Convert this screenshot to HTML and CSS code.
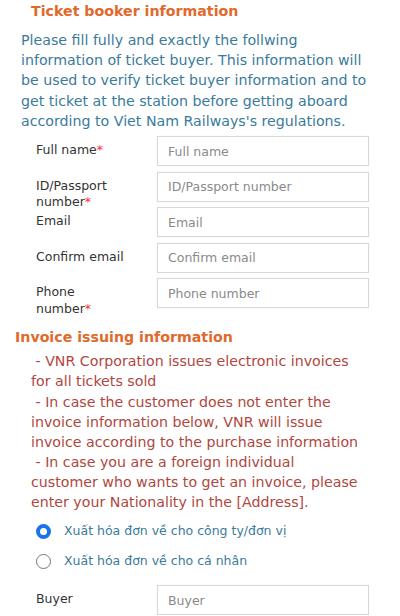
FILE: index.html
```html
<!DOCTYPE html>
<html>
<head>
<meta charset="utf-8">
<link rel="stylesheet" href="styles.css">
</head>
<body>
<div class="page">
  <h2 class="title booker-title">Ticket booker information</h2>
  <p class="intro">Please fill fully and exactly the follwing information of ticket buyer. This information will be used to verify ticket buyer information and to get ticket at the station before getting aboard according to Viet Nam Railways's regulations.</p>
  <div class="form">
    <div class="row"><label class="lbl">Full name<span class="req">*</span></label><input class="inp" placeholder="Full name"></div>
    <div class="row"><label class="lbl">ID/Passport number<span class="req">*</span></label><input class="inp" placeholder="ID/Passport number"></div>
    <div class="row"><label class="lbl">Email</label><input class="inp" placeholder="Email"></div>
    <div class="row"><label class="lbl">Confirm email</label><input class="inp" placeholder="Confirm email"></div>
    <div class="row"><label class="lbl">Phone number<span class="req">*</span></label><input class="inp" placeholder="Phone number"></div>
  </div>
  <h2 class="title invoice-title">Invoice issuing information</h2>
  <div class="notes">
    <div>&nbsp;- VNR Corporation issues electronic invoices for all tickets sold</div>
    <div>&nbsp;- In case the customer does not enter the invoice information below, VNR will issue invoice according to the purchase information</div>
    <div>&nbsp;- In case you are a foreign individual customer who wants to get an invoice, please enter your Nationality in the [Address].</div>
  </div>
  <div class="radios">
    <label class="radio"><span class="dot on"></span><span>Xuất hóa đơn về cho công ty/đơn vị</span></label>
    <label class="radio"><span class="dot"></span><span>Xuất hóa đơn về cho cá nhân</span></label>
  </div>
  <div class="form buyer">
    <div class="row"><label class="lbl">Buyer</label><input class="inp" placeholder="Buyer"></div>
  </div>
</div>
</body>
</html>
```

FILE: styles.css
```css
html, body {
  margin: 0;
  padding: 0;
  background: #fff;
}
body {
  font-family: "DejaVu Sans", Verdana, sans-serif;
  color: #333;
  overflow: hidden;
}
.page {
  width: 400px;
}
.title {
  margin: 0;
  font-size: 14.2px;
  font-weight: bold;
  color: #df6a2c;
  line-height: 20px;
}
.booker-title {
  padding: 1px 0 0 31px;
}
.intro {
  margin: 9px 0 0 0;
  padding: 0 24px 0 21px;
  font-size: 14.2px;
  line-height: 20.2px;
  color: #3a7b9b;
}
.form {
  margin-top: 5px;
  display: flex;
  flex-direction: column;
  gap: 5.6px;
  padding-left: 36px;
}
.row {
  display: flex;
  height: 30px;
  align-items: flex-start;
}
.lbl {
  width: 121px;
  flex: none;
  margin-top: 6px;
  font-size: 12.5px;
  line-height: 16.8px;
  color: #333;
  box-sizing: border-box;
  padding-right: 30px;
}
.req {
  color: #e33;
}
.inp {
  flex: none;
  width: 212px;
  height: 30px;
  box-sizing: border-box;
  border: 1px solid #d8d8d8;
  box-shadow: 0 0 1px rgba(0,0,0,0.08);
  padding: 0 10px;
  margin: 0;
  font-family: "DejaVu Sans", Verdana, sans-serif;
  font-size: 12.5px;
  color: #555;
  background: #fff;
  outline: none;
}
.inp::placeholder {
  color: #8a8a8a;
}
.invoice-title {
  margin-top: 19px;
  padding-left: 15px;
}
.notes {
  margin-top: 4px;
  padding: 0 40px 0 31px;
  font-size: 14.2px;
  line-height: 20.1px;
  color: #b0473e;
}
.radios {
  margin-top: 10px;
  padding-left: 36px;
  display: flex;
  flex-direction: column;
  gap: 12px;
}
.radio {
  display: flex;
  align-items: center;
  gap: 13px;
  font-size: 12.5px;
  line-height: 18px;
  color: #3a7b9b;
}
.dot {
  width: 15px;
  height: 15px;
  box-sizing: border-box;
  border-radius: 50%;
  border: 1.5px solid #777;
  flex: none;
}
.dot.on {
  border: 4px solid #1a73e8;
  background: #fff;
}
.buyer {
  margin-top: 15px;
}
```
